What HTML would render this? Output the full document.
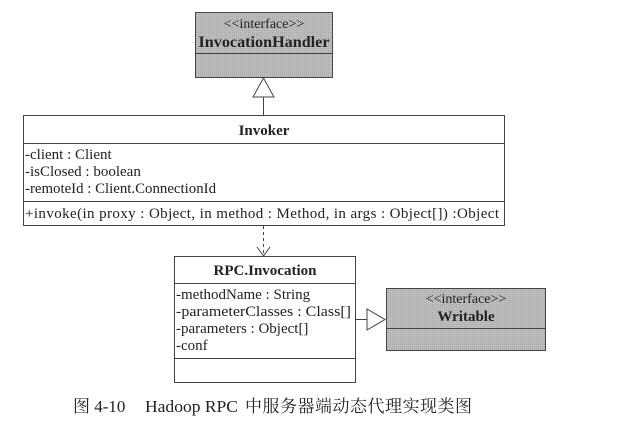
<!DOCTYPE html>
<html><head><meta charset="utf-8"><style>
body{margin:0;background:#fff;width:634px;height:419px;overflow:hidden}
svg text{font-family:"Liberation Serif","Noto Serif CJK SC",serif;fill:#222}
</style></head><body>
<svg width="634" height="419" viewBox="0 0 634 419" xmlns="http://www.w3.org/2000/svg">
<defs><pattern id="g" width="2" height="2" patternUnits="userSpaceOnUse"><rect width="2" height="2" fill="#bdbdbd"/><rect width="1" height="1" fill="#a8a8a8"/></pattern></defs>
<g stroke="#444" stroke-width="1" fill="none">
<rect x="195.5" y="12.5" width="137" height="65" fill="url(#g)"/>
<line x1="195" y1="53.5" x2="333" y2="53.5"/>
<polygon points="263.5,78 253,97 274,97" fill="#fff"/>
<line x1="263.5" y1="97" x2="263.5" y2="115"/>
<rect x="23.5" y="115.5" width="481" height="110" fill="#fff"/>
<line x1="23" y1="143.5" x2="505" y2="143.5"/>
<line x1="23" y1="201.5" x2="505" y2="201.5"/>
<line x1="263.5" y1="226" x2="263.5" y2="255" stroke-dasharray="3,3"/>
<polyline points="257,247 263.5,256 270,247"/>
<rect x="174.5" y="256.5" width="181" height="126" fill="#fff"/>
<line x1="174" y1="283.5" x2="356" y2="283.5"/>
<line x1="174" y1="358.5" x2="356" y2="358.5"/>
<line x1="355" y1="319.5" x2="367" y2="319.5"/>
<polygon points="367,309 367,330 385,319.5" fill="#fff"/>
<rect x="386.5" y="288.5" width="159" height="62" fill="url(#g)"/>
<line x1="386" y1="328.5" x2="546" y2="328.5"/>
</g>
<text x="264" y="28" font-size="14" text-anchor="middle" fill="#444">&lt;&lt;interface&gt;&gt;</text>
<text x="264" y="47" font-size="16" font-weight="bold" text-anchor="middle" textLength="131" lengthAdjust="spacingAndGlyphs">InvocationHandler</text>
<text x="264" y="135" font-size="15" font-weight="bold" text-anchor="middle">Invoker</text>
<text x="25" y="159" font-size="15">-client : Client</text>
<text x="25" y="176" font-size="15">-isClosed : boolean</text>
<text x="25" y="193" font-size="15" textLength="191" lengthAdjust="spacingAndGlyphs">-remoteId : Client.ConnectionId</text>
<text x="25" y="218" font-size="15" textLength="474" lengthAdjust="spacing">+invoke(in proxy : Object, in method : Method, in args : Object[]) :Object</text>
<text x="265" y="275" font-size="15" font-weight="bold" text-anchor="middle">RPC.Invocation</text>
<text x="176" y="299" font-size="15">-methodName : String</text>
<text x="176" y="316" font-size="15" textLength="175" lengthAdjust="spacingAndGlyphs">-parameterClasses : Class[]</text>
<text x="176" y="333" font-size="15">-parameters : Object[]</text>
<text x="176" y="350" font-size="15">-conf</text>
<text x="466" y="303" font-size="14" text-anchor="middle" fill="#444">&lt;&lt;interface&gt;&gt;</text>
<text x="466" y="321" font-size="15" font-weight="bold" text-anchor="middle">Writable</text>
<text x="73" y="412" font-size="17" fill="#333">图 4-10</text>
<text x="145" y="412" font-size="17" fill="#333" textLength="93" lengthAdjust="spacingAndGlyphs">Hadoop RPC</text>
<text x="245" y="412" font-size="17" fill="#333" textLength="227" lengthAdjust="spacing">中服务器端动态代理实现类图</text>
</svg>
</body></html>
